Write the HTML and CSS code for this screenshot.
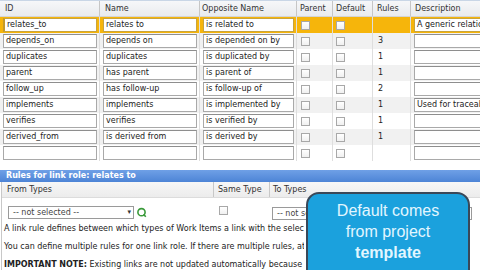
FILE: index.html
```html
<!DOCTYPE html>
<html>
<head>
<meta charset="utf-8">
<link rel="stylesheet" href="styles.css">
</head>
<body>
<div class="page">
  <div class="grid">
    <div class="row head">
      <div class="cell">ID</div>
      <div class="cell">Name</div>
      <div class="cell">Opposite Name</div>
      <div class="cell">Parent</div>
      <div class="cell">Default</div>
      <div class="cell">Rules</div>
      <div class="cell">Description</div>
    </div>
    <div class="row current">
      <div class="cell"><div class="inp">relates_to</div></div>
      <div class="cell"><div class="inp">relates to</div></div>
      <div class="cell"><div class="inp">is related to</div></div>
      <div class="cell chk"><span class="cb"></span></div>
      <div class="cell chk2"><span class="cb"></span></div>
      <div class="cell num"></div>
      <div class="cell desc"><div class="inp">A generic relatio</div></div>
    </div>
    <div class="row alt">
      <div class="cell"><div class="inp">depends_on</div></div>
      <div class="cell"><div class="inp">depends on</div></div>
      <div class="cell"><div class="inp">is depended on by</div></div>
      <div class="cell chk"><span class="cb"></span></div>
      <div class="cell chk2"><span class="cb"></span></div>
      <div class="cell num">3</div>
      <div class="cell desc"><div class="inp"></div></div>
    </div>
    <div class="row">
      <div class="cell"><div class="inp">duplicates</div></div>
      <div class="cell"><div class="inp">duplicates</div></div>
      <div class="cell"><div class="inp">is duplicated by</div></div>
      <div class="cell chk"><span class="cb"></span></div>
      <div class="cell chk2"><span class="cb"></span></div>
      <div class="cell num">1</div>
      <div class="cell desc"><div class="inp"></div></div>
    </div>
    <div class="row alt">
      <div class="cell"><div class="inp">parent</div></div>
      <div class="cell"><div class="inp">has parent</div></div>
      <div class="cell"><div class="inp">is parent of</div></div>
      <div class="cell chk"><span class="cb"></span></div>
      <div class="cell chk2"><span class="cb"></span></div>
      <div class="cell num">1</div>
      <div class="cell desc"><div class="inp"></div></div>
    </div>
    <div class="row">
      <div class="cell"><div class="inp">follow_up</div></div>
      <div class="cell"><div class="inp">has follow-up</div></div>
      <div class="cell"><div class="inp">is follow-up of</div></div>
      <div class="cell chk"><span class="cb"></span></div>
      <div class="cell chk2"><span class="cb"></span></div>
      <div class="cell num">2</div>
      <div class="cell desc"><div class="inp"></div></div>
    </div>
    <div class="row alt">
      <div class="cell"><div class="inp">implements</div></div>
      <div class="cell"><div class="inp">implements</div></div>
      <div class="cell"><div class="inp">is implemented by</div></div>
      <div class="cell chk"><span class="cb"></span></div>
      <div class="cell chk2"><span class="cb"></span></div>
      <div class="cell num">1</div>
      <div class="cell desc"><div class="inp">Used for traceab</div></div>
    </div>
    <div class="row">
      <div class="cell"><div class="inp">verifies</div></div>
      <div class="cell"><div class="inp">verifies</div></div>
      <div class="cell"><div class="inp">is verified by</div></div>
      <div class="cell chk"><span class="cb"></span></div>
      <div class="cell chk2"><span class="cb"></span></div>
      <div class="cell num">1</div>
      <div class="cell desc"><div class="inp"></div></div>
    </div>
    <div class="row alt">
      <div class="cell"><div class="inp">derived_from</div></div>
      <div class="cell"><div class="inp">is derived from</div></div>
      <div class="cell"><div class="inp">is derived by</div></div>
      <div class="cell chk"><span class="cb"></span></div>
      <div class="cell chk2"><span class="cb"></span></div>
      <div class="cell num">1</div>
      <div class="cell desc"><div class="inp"></div></div>
    </div>
    <div class="row">
      <div class="cell"><div class="inp"></div></div>
      <div class="cell"><div class="inp"></div></div>
      <div class="cell"><div class="inp"></div></div>
      <div class="cell chk"><span class="cb"></span></div>
      <div class="cell chk2"><span class="cb"></span></div>
      <div class="cell num"></div>
      <div class="cell desc"><div class="inp"></div></div>
    </div>
  </div>

  <div class="bar">Rules for link role: relates to</div>

  <div class="rules">
    <div class="rhead">
      <div class="rc1">From Types</div>
      <div class="rc2">Same Type</div>
      <div class="rc3">To Types</div>
    </div>
    <div class="rrow">
      <div class="rc1">
        <div class="select">-- not selected --<span class="arrow">&#9662;</span></div>
        <svg class="go" width="11" height="11" viewBox="0 0 11 11"><circle cx="5.5" cy="5.2" r="3.6" fill="none" stroke="#3a9a3a" stroke-width="1.6"/><path d="M7.6 7.4 L9.8 9.8" stroke="#3a9a3a" stroke-width="1.6"/></svg>
      </div>
      <div class="rc2"><span class="cb"></span></div>
      <div class="rc3"><div class="select wide">-- not selected --</div></div>
    </div>
    <p class="note">A link rule defines between which types of Work Items a link with the selected link role can be created.</p>
    <p class="note">You can define multiple rules for one link role. If there are multiple rules, at least one of them must be satisfied.</p>
    <p class="note"><b>IMPORTANT NOTE:</b> Existing links are not updated automatically because such a change may be expensive.</p>
  </div>

  <div class="callout">Default comes<br>from project<br><b>template</b></div>
</div>
</body>
</html>
```

FILE: styles.css
```css
html, body {
  margin: 0;
  padding: 0;
  background: #ffffff;
}
body {
  width: 480px;
  height: 270px;
  overflow: hidden;
  font-family: "DejaVu Sans", Verdana, sans-serif;
  font-size: 8px;
  color: #222;
}
.page {
  position: relative;
  width: 480px;
  height: 270px;
  overflow: hidden;
}
.grid {
  display: flex;
  flex-direction: column;
  width: 480px;
}
.row {
  display: grid;
  grid-template-columns: 100px 100px 97px 36px 40px 38px 69px;
  height: 16px;
  background: #ffffff;
}
.row.alt {
  background: #f1f1f1;
}
.row.current {
  background: #f6b50b;
}
.row.head {
  height: 17px;
  background: linear-gradient(#f6f7f9, #e9ebee);
  border-top: 1px solid #c9d6e6;
  box-sizing: border-box;
  border-bottom: 1px solid #d4d4d4;
  color: #333;
}
.row.head .cell {
  padding: 0 0 0 5px;
  line-height: 15px;
  border-right: 1px solid #c6c6c6;
}
.row.head .cell:nth-child(3) { padding-left: 2px; }
.row.head .cell:nth-child(4) { padding-left: 3px; }
.row.head .cell:nth-child(5) { padding-left: 3px; }
.row.head .cell:nth-child(6) { padding-left: 4px; }
.row.head .cell:nth-child(7) { padding-left: 4px; border-right: none; }

.cell {
  box-sizing: border-box;
  border-right: 1px solid #dedede;
  padding: 1px 2px 0 3px;
  overflow: hidden;
  white-space: nowrap;
}
.inp {
  box-sizing: border-box;
  height: 14px;
  border: 1px solid #a9a9a9;
  border-top-color: #8e8e8e;
  background: #fff;
  padding: 0 2px;
  line-height: 12px;
  color: #222;
  overflow: hidden;
  white-space: nowrap;
}
.current .inp {
  border-color: #c9a43c;
}
.current .cell:first-child .inp {
  border-left: 2px solid #c49a2a;
}
.cell.chk { padding: 4px 0 0 4px; }
.cell.chk2 { padding: 4px 0 0 3px; }
.cell.num { padding: 0 0 0 5px; line-height: 16px; }
.cell.desc { padding: 1px 0 0 3px; border-right: none; }
.cell.desc .inp { width: 80px; }

.cb {
  display: block;
  box-sizing: border-box;
  width: 9px;
  height: 9px;
  border: 1px solid #a8a8a8;
  background: linear-gradient(#ffffff, #f0f0f0);
}

.bar {
  margin-top: 9px;
  height: 12px;
  line-height: 12px;
  padding-left: 6px;
  background: linear-gradient(#6fa0e6, #4d84d6);
  color: #ffffff;
  font-weight: bold;
  white-space: nowrap;
}

.rules {
  border-left: 1px solid #c8c8c8;
  margin-left: 1px;
}
.rhead, .rrow {
  display: grid;
  grid-template-columns: 212px 56px 1fr;
}
.rhead {
  height: 15px;
  line-height: 15px;
  background: linear-gradient(#f7f7f7, #ececec);
  border-bottom: 1px solid #dcdcdc;
  color: #333;
}
.rhead > div {
  padding-left: 5px;
  border-right: 1px solid #c8c8c8;
  white-space: nowrap;
}
.rhead .rc2 { padding-left: 4px; }
.rhead .rc3 { padding-left: 3px; border-right: none; }
.rrow {
  height: 24px;
  align-items: start;
}
.rrow .rc1 {
  display: flex;
  align-items: center;
  gap: 2px;
  padding: 8px 0 0 6px;
}
.rrow .rc2 { padding: 8px 0 0 5px; }
.rrow .rc3 { padding: 9px 0 0 2px; }
.select {
  box-sizing: border-box;
  width: 126px;
  height: 13px;
  border: 1px solid #9a9a9a;
  background: #fff;
  line-height: 11px;
  padding-left: 4px;
  color: #444;
  position: relative;
  white-space: nowrap;
  overflow: hidden;
}
.select.wide { width: 200px; }
.arrow {
  position: absolute;
  right: 2px;
  top: 0;
  font-size: 7px;
  color: #333;
}
.go { display: block; }

.note {
  margin: 0;
  padding-left: 2px;
  height: 18px;
  line-height: 18px;
  width: 300px;
  white-space: nowrap;
  overflow: hidden;
  color: #222;
}
.rrow + .note { margin-top: -2px; }

.callout {
  position: absolute;
  left: 306px;
  top: 192px;
  width: 164px;
  height: 90px;
  box-sizing: border-box;
  border: 2px solid #3a4858;
  border-radius: 13px;
  background: #1ba1dd;
  color: #e2f6ff;
  font-family: "Liberation Sans", Arial, sans-serif;
  font-size: 16px;
  line-height: 21px;
  text-align: center;
  padding-top: 6px;
}
.callout b { font-weight: bold; }
```
